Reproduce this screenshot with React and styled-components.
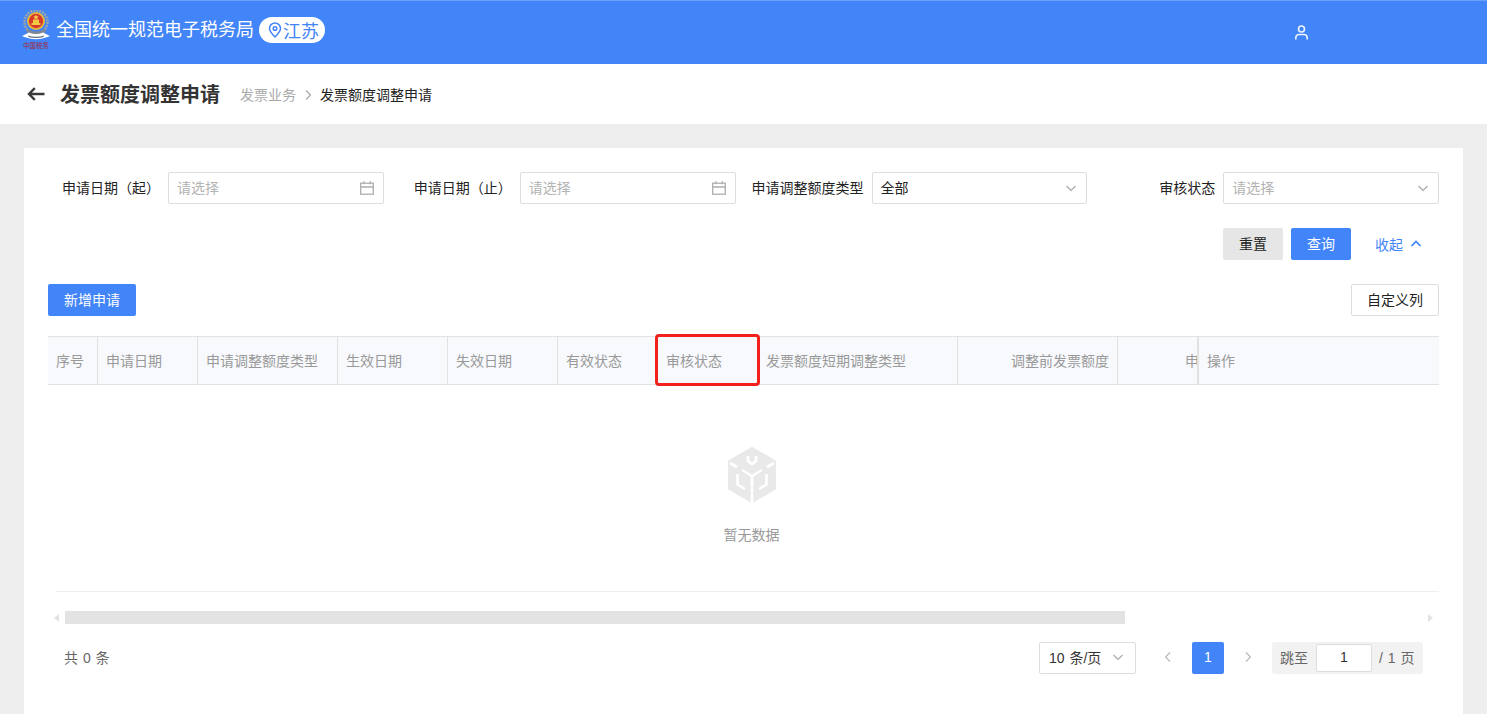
import React from 'react';
import styled, { createGlobalStyle } from 'styled-components';

const Global = createGlobalStyle`
  html, body { margin: 0; padding: 0; height: 714px; overflow: hidden; }
  body { font-family: "Liberation Sans", "Noto Sans CJK SC", sans-serif; font-size: 14px; color: #333; background: #eee; }
  * { box-sizing: border-box; }
`;

const Page = styled.div`height: 714px; overflow: hidden; background: #eeeeee;`;
const TopBar = styled.header`
  height: 64px; background: #4285f8; border-top: 1px solid #6b9ff9;
  display: flex; align-items: center; padding: 0 0 5px 22px; color: #fff;
`;
const Logo = styled.div`
  width: 28px; height: 40px; flex: none; display: flex; flex-direction: column; align-items: center;
`;
const LogoText = styled.span`
  font-size: 6.4px; line-height: 8px; color: #a8232c; white-space: nowrap; margin-top: 1px;
`;
const SiteName = styled.div`font-size: 18px; line-height: 26px; margin-left: 6px; white-space: nowrap;`;
const RegionTag = styled.div`
  height: 26px; margin-left: 5px; border-radius: 13px; background: #fff; color: #4285f8;
  display: flex; align-items: center; padding: 0 6px 0 9px; font-size: 18px; gap: 1px;
`;
const UserIcon = styled.div`margin-left: auto; margin-right: 179px; display: flex; margin-top: 4px;`;

const TitleBar = styled.div`
  height: 60px; background: #fff; display: flex; align-items: center; padding: 2px 0 0 27px;
`;
const BackIcon = styled.div`display: flex; width: 33px; flex: none; margin-bottom: 2px;`;
const PageTitle = styled.h1`margin: 0; font-size: 20px; font-weight: 700; color: #333; line-height: 28px;`;
const Crumbs = styled.div`display: flex; align-items: center; margin-left: 20px; font-size: 14px; line-height: 20px;`;
const CrumbLink = styled.span`color: #aaa;`;
const CrumbNow = styled.span`color: #222;`;
const CrumbSep = styled.span`display: flex; width: 24px; justify-content: center;`;

const Body = styled.main`padding: 24px 24px 0;`;
const Card = styled.section`background: #fff; padding: 24px 24px 0; height: 600px;`;
const FilterGrid = styled.div`display: grid; grid-template-columns: repeat(4, 1fr); margin-left: -16px;`;
const Field = styled.div`display: grid; grid-template-columns: 128px 1fr; column-gap: 8px; align-items: center;`;
const Label = styled.label`text-align: right; color: #222; white-space: nowrap; font-size: 14px; padding-bottom: 2px;`;
const Control = styled.div`
  height: 32px; border: 1px solid #ddd; border-radius: 2px; background: #fff; display: flex; align-items: center;
  justify-content: space-between; padding: 0 9px 0 8px; font-size: 14px; color: ${p => (p.$filled ? '#222' : '#b3b3b3')};
`;
const ControlText = styled.span`padding-bottom: 2px;`;
const Actions = styled.div`display: flex; justify-content: flex-end; align-items: center; margin-top: 24px; padding-right: 17px; gap: 8px;`;
const Button = styled.button`
  font: inherit; font-size: 14px; height: 32px; border-radius: 2px; cursor: pointer; padding: 0 0 2px;
  width: ${p => p.$w || 60}px; border: ${p => (p.$kind === 'outline' ? '1px solid #ddd' : 'none')};
  background: ${p => (p.$kind === 'primary' ? '#4285f8' : p.$kind === 'muted' ? '#e6e6e6' : '#fff')};
  color: ${p => (p.$kind === 'primary' ? '#fff' : '#222')};
`;
const Collapse = styled.span`color: #4285f8; display: flex; align-items: center; gap: 7px; margin-left: 16px;`;
const Toolbar = styled.div`display: flex; justify-content: space-between; margin-top: 24px;`;

const HeadRow = styled.div`
  position: relative; display: flex; height: 49px; margin-top: 20px; background: #f8f9fd;
  border-top: 1px solid #e2e2e2; border-bottom: 1px solid #e2e2e2; color: #999; font-size: 14px;
`;
const HeadScroll = styled.div`flex: 0 0 1149px; display: flex; overflow: hidden;`;
const HeadCell = styled.div`
  flex: 0 0 ${p => p.$w}px; display: flex; align-items: center; padding: 0 8px 2px 8px; white-space: nowrap;
  border-right: 1px solid #e2e2e2; justify-content: ${p => (p.$right ? 'flex-end' : 'flex-start')};
`;
const FixedCell = styled.div`flex: 1; display: flex; align-items: center; padding: 0 0 2px 8px; border-left: 2px solid #e2e2e2;`;
const Highlight = styled.div`
  position: absolute; left: 607px; top: -3px; width: 105px; height: 52px; border: 3px solid #f2211b; border-radius: 4px; pointer-events: none;
`;

const Empty = styled.div`
  height: 207px; margin-left: 8px; border-bottom: 1px solid #eee; display: flex; flex-direction: column; align-items: center;
  padding-top: 62px; padding-left: 8px; color: #999; font-size: 14px;
`;
const EmptyText = styled.div`margin-top: 22px; line-height: 20px;`;
const ScrollTrack = styled.div`display: flex; align-items: center; height: 13px; margin-top: 19px; padding-left: 6px;`;
const ScrollThumb = styled.div`width: 1060px; height: 13px; background: #e3e3e3; margin-left: 5px;`;
const ScrollEnd = styled.div`margin-left: auto; margin-right: 6px; display: flex;`;

const Footer = styled.div`display: flex; align-items: center; justify-content: space-between; margin-top: 18px; padding: 0 16px; height: 32px; word-spacing: 1px;`;
const Total = styled.span`color: #666; font-size: 14px; padding-bottom: 2px;`;
const Pager = styled.div`display: flex; align-items: center; gap: 8px;`;
const PageSize = styled.div`
  width: 97px; height: 32px; border: 1px solid #ddd; border-radius: 2px; display: flex; align-items: center; justify-content: space-between;
  padding: 0 11px 2px 9px; color: #333; margin-right: 8px; white-space: nowrap;
`;
const PageBtn = styled.div`
  width: 32px; height: 32px; border-radius: 2px; display: flex; align-items: center; justify-content: center;
  background: ${p => (p.$active ? '#4285f8' : 'transparent')}; color: #fff; padding-bottom: 2px;
`;
const Jump = styled.div`
  height: 32px; width: 151px; background: #f2f2f2; border-radius: 3px; display: flex; align-items: center; padding: 0 8px 2px; color: #666; white-space: nowrap;
`;
const JumpInput = styled.div`
  width: 56px; height: 28px; margin: 2px 7px 0 8px; background: #fff; border: 1px solid #ddd; border-radius: 2px; color: #333;
  display: flex; align-items: center; justify-content: center; flex: none; padding-bottom: 2px;
`;

const Calendar = () => (
  <svg width="14" height="14" viewBox="0 0 14 14" fill="none" stroke="#adadad" strokeWidth="1.3">
    <rect x="0.7" y="2.2" width="12.6" height="11" />
    <path d="M0.7 6h12.6M3.8 0.2v3M10.2 0.2v3" />
  </svg>
);
const Chevron = ({ dir = 'down', color = '#aaa', size = 12, weight = 1.2 }) => {
  const d = { down: 'M1.5 4l4.5 4.5L10.5 4', up: 'M1.5 8L6 3.5 10.5 8', left: 'M8 1.5L3.5 6 8 10.5', right: 'M4 1.5L8.5 6 4 10.5' }[dir];
  return (
    <svg width={size} height={size} viewBox="0 0 12 12" fill="none" stroke={color} strokeWidth={weight}>
      <path d={d} />
    </svg>
  );
};
const Emblem = () => (
  <svg width="28" height="31" viewBox="0 0 28 31">
    <circle cx="14" cy="12" r="11.5" fill="none" stroke="#9aa3ad" strokeWidth="2.6" strokeDasharray="2 1" />
    <circle cx="14" cy="11" r="9" fill="#e8b93a" />
    <circle cx="14" cy="11" r="7.2" fill="#d8382c" />
    <path d="M9.5 13h9v2h-9zM11 9.5h6V13h-6z" fill="#f3c845" />
    <path d="M14 4.6l.8 1.7 1.8.2-1.3 1.2.3 1.8-1.6-.9-1.6.9.3-1.8-1.3-1.2 1.8-.2z" fill="#f6d24f" />
    <path d="M5 19q9 5 18 0l1 3q-10 5-20 0z" fill="#7d8791" />
    <path d="M0 26l7-3.6q7 3 14 0l7 3.6-4 1.6q-10 3.2-20 0z" fill="#fff" />
    <path d="M6 25.5q8 2.6 16 0l-.5 1.5q-7.5 2.2-15 0z" fill="#69727c" />
  </svg>
);
const Pin = () => (
  <svg width="14" height="16" viewBox="0 0 14 16" fill="none" stroke="#4285f8" strokeWidth="1.5">
    <path d="M7 15C4 12 1.5 9.5 1.5 6.5a5.5 5.5 0 0 1 11 0C12.5 9.5 10 12 7 15z" />
    <circle cx="7" cy="6.5" r="1.8" />
  </svg>
);
const Person = () => (
  <svg width="13" height="15" viewBox="0 0 13 15" fill="none" stroke="#eef4ff" strokeWidth="1.6">
    <circle cx="6.5" cy="4" r="3" />
    <path d="M0.8 14.5v-1.8a3.4 3.4 0 0 1 3.4-3.2h4.6a3.4 3.4 0 0 1 3.4 3.2v1.8" />
  </svg>
);
const Back = () => (
  <svg width="18" height="14" viewBox="0 0 18 14" fill="none" stroke="#3a3a3a" strokeWidth="2.4">
    <path d="M17.5 7H2.5M7.8 1.2L2 7l5.8 5.8" />
  </svg>
);
const Cube = () => (
  <svg width="48" height="56" viewBox="0 0 48 56">
    <path d="M24 1.5L46.5 14.5v27L24 54.5 1.5 41.5v-27z" fill="#e9e9e9" stroke="#e9e9e9" strokeWidth="3" strokeLinejoin="round" />
    <g fill="none" stroke="#fff" strokeWidth="2.6">
      <path d="M20 9v5l4 3 4-3V9" />
      <path d="M24 29v27" />
      <path d="M24 29L14 23M24 29l10-6" />
      <path d="M2 16l7 4M46 16l-7 4" />
      <path d="M9.500 27v10.500L17 42M38.500 27v10.500L31 42" />
    </g>
  </svg>
);
const Tri = ({ dir }) => (
  <svg width="6" height="8" viewBox="0 0 6 8">
    <path d={dir === 'left' ? 'M5 0v8L0 4z' : 'M1 0v8l5-4z'} fill="#e3e3e3" />
  </svg>
);

const filters = [
  { label: '申请日期（起）', kind: 'date' },
  { label: '申请日期（止）', kind: 'date' },
  { label: '申请调整额度类型', kind: 'select', value: '全部' },
  { label: '审核状态', kind: 'select' },
];
const columns = [
  { t: '序号', w: 50 }, { t: '申请日期', w: 100 }, { t: '申请调整额度类型', w: 140 }, { t: '生效日期', w: 110 },
  { t: '失效日期', w: 110 }, { t: '有效状态', w: 100 }, { t: '审核状态', w: 100 }, { t: '发票额度短期调整类型', w: 200 },
  { t: '调整前发票额度', w: 160, right: true }, { t: '申请调整额度', w: 160, right: true },
];

export default function App() {
  return (
    <Page>
      <Global />
      <TopBar>
        <Logo>
          <Emblem />
          <LogoText>中国税务</LogoText>
        </Logo>
        <SiteName>全国统一规范电子税务局</SiteName>
        <RegionTag><Pin />江苏</RegionTag>
        <UserIcon><Person /></UserIcon>
      </TopBar>
      <TitleBar>
        <BackIcon><Back /></BackIcon>
        <PageTitle>发票额度调整申请</PageTitle>
        <Crumbs>
          <CrumbLink>发票业务</CrumbLink>
          <CrumbSep><Chevron dir="right" color="#aaa" /></CrumbSep>
          <CrumbNow>发票额度调整申请</CrumbNow>
        </Crumbs>
      </TitleBar>
      <Body>
        <Card>
          <FilterGrid>
            {filters.map(f => (
              <Field key={f.label}>
                <Label>{f.label}</Label>
                <Control $filled={!!f.value}>
                  <ControlText>{f.value || '请选择'}</ControlText>
                  {f.kind === 'date' ? <Calendar /> : <Chevron />}
                </Control>
              </Field>
            ))}
          </FilterGrid>
          <Actions>
            <Button $kind="muted">重置</Button>
            <Button $kind="primary">查询</Button>
            <Collapse>收起<Chevron dir="up" color="#4285f8" weight={1.7} /></Collapse>
          </Actions>
          <Toolbar>
            <Button $kind="primary" $w={88}>新增申请</Button>
            <Button $kind="outline" $w={88}>自定义列</Button>
          </Toolbar>
          <HeadRow>
            <HeadScroll>
              {columns.map(c => (
                <HeadCell key={c.t} $w={c.w} $right={c.right}>{c.t}</HeadCell>
              ))}
            </HeadScroll>
            <FixedCell>操作</FixedCell>
            <Highlight />
          </HeadRow>
          <Empty>
            <Cube />
            <EmptyText>暂无数据</EmptyText>
          </Empty>
          <ScrollTrack>
            <Tri dir="left" />
            <ScrollThumb />
            <ScrollEnd><Tri dir="right" /></ScrollEnd>
          </ScrollTrack>
          <Footer>
            <Total>共 0 条</Total>
            <Pager>
              <PageSize>10 条/页<Chevron /></PageSize>
              <PageBtn><Chevron dir="left" color="#bbb" /></PageBtn>
              <PageBtn $active>1</PageBtn>
              <PageBtn><Chevron dir="right" color="#bbb" /></PageBtn>
              <Jump>跳至<JumpInput>1</JumpInput>/ 1 页</Jump>
            </Pager>
          </Footer>
        </Card>
      </Body>
    </Page>
  );
}
